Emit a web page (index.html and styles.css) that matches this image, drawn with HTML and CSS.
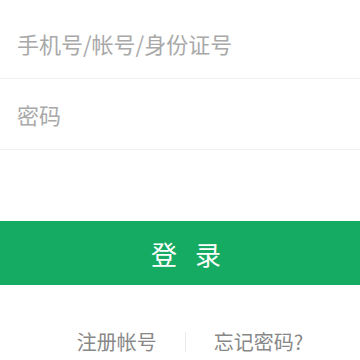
FILE: index.html
```html
<!DOCTYPE html>
<html>
<head>
<meta charset="utf-8">
<link rel="stylesheet" href="styles.css">
</head>
<body>
<div class="page">
  <div class="form">
    <div class="row first"><span class="ph">手机号/帐号/身份证号</span></div>
    <div class="row"><span class="ph">密码</span></div>
  </div>
  <div class="btn"><span>登</span><span>录</span></div>
  <div class="links">
    <span class="link">注册帐号</span>
    <span class="sep"></span>
    <span class="link">忘记密码?</span>
  </div>
</div>
</body>
</html>
```
FILE: styles.css
```css
html, body {
  margin: 0;
  padding: 0;
  background: #ffffff;
}
body {
  font-family: "Noto Sans CJK SC", "Noto Sans", sans-serif;
}
.page {
  width: 360px;
  height: 360px;
  overflow: hidden;
}
.form {
  padding-top: 8px;
}
.row {
  height: 70px;
  border-bottom: 1px solid #f0f0f0;
  display: flex;
  align-items: center;
  padding-left: 17px;
}
.ph {
  font-size: 22px;
  color: #a9a9a9;
}
.btn {
  margin-top: 71px;
  height: 64px;
  background: #16ab63;
  color: #ffffff;
  font-size: 26px;
  display: flex;
  align-items: center;
  justify-content: center;
  gap: 18px;
  padding-left: 12px;
}
.links {
  margin-top: 42px;
  padding-left: 20px;
  display: flex;
  align-items: center;
  justify-content: center;
}
.link {
  font-size: 20px;
  color: #888888;
}
.sep {
  width: 1px;
  height: 20px;
  background: #ebebeb;
  margin: 0 28px;
}
```
